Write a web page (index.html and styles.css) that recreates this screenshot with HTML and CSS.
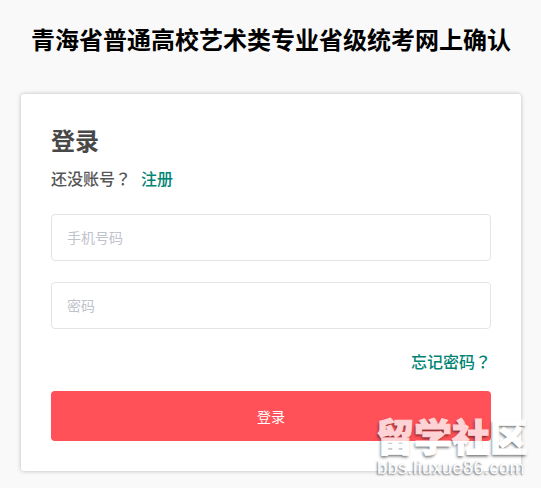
FILE: index.html
```html
<!DOCTYPE html>
<html lang="zh-CN">
<head>
    <meta charset="UTF-8">
    <meta name="viewport" content="width=device-width, initial-scale=1.0">
    <title>登录</title>
    <link rel="stylesheet" href="styles.css">
</head>
<body>
    <div class="container">
        <h1 class="page-title">青海省普通高校艺术类专业省级统考网上确认</h1>

        <form class="login-box">
            <h2 class="login-title">登录</h2>
            <p class="register">还没账号<span class="mark" lang="zh-TW">？</span><a class="link" href="#">注册</a></p>
            <input class="field" type="text" placeholder="手机号码">
            <input class="field" type="password" placeholder="密码">
            <div class="forgot"><a class="link" href="#">忘记密码<span class="mark" lang="zh-TW">？</span></a></div>
            <button class="login-button" type="button">登录</button>
        </form>
    </div>

    <div class="watermark">
        <div class="watermark-name">留学社区</div>
        <div class="watermark-url">bbs.liuxue86.com</div>
    </div>
</body>
</html>
```
FILE: styles.css
```css
* {
    box-sizing: border-box;
}
body {
    margin: 0;
    height: 488px;
    overflow: hidden;
    background-color: #f9f9f9;
    font-family: "Liberation Sans", "Noto Sans CJK SC", sans-serif;
}
.container {
    width: 500px;
    margin-left: 21px;
    padding-top: 23px;
}
.page-title {
    margin: 0 0 35px;
    font-size: 24px;
    line-height: 36px;
    text-align: center;
    white-space: nowrap;
    color: #000;
}
.login-box {
    height: 377px;
    padding: 31px 30px 30px;
    background-color: #fff;
    border-radius: 3px;
    box-shadow: 0 0 4px rgba(0, 0, 0, 0.25);
}
.login-title {
    margin: 0;
    font-size: 24px;
    line-height: 34px;
    color: #484848;
}
.register {
    margin: 9px 0 22px;
    font-size: 16px;
    font-weight: 500;
    line-height: 24px;
    color: #565656;
}
.register .link {
    margin-left: 10px;
}
/* full-width question mark centred in its cell */
.mark {
    font-family: "Noto Sans CJK TC", sans-serif;
    line-height: 1;
}
.link {
    color: #008474;
    font-weight: 500;
    text-decoration: none;
}
.field {
    display: block;
    width: 100%;
    height: 47px;
    margin-bottom: 21px;
    padding: 0 15px;
    border: 1px solid #e4e4e4;
    border-radius: 4px;
    outline: none;
    font-family: inherit;
    font-size: 14px;
}
.field::placeholder {
    color: #bfc3cc;
}
.forgot {
    padding-top: 1px;
    margin-bottom: 16px;
    font-size: 16px;
    line-height: 24px;
    text-align: right;
}
.login-button {
    display: block;
    width: 100%;
    height: 50px;
    border: none;
    border-radius: 4px;
    background-color: #ff5157;
    color: #fff;
    font-family: inherit;
    font-size: 14px;
    cursor: pointer;
}
/* site mark over the bottom right corner */
.watermark {
    position: absolute;
    left: 376px;
    top: 418px;
    white-space: nowrap;
    pointer-events: none;
    color: #fff;
    opacity: 0.75;
}
.watermark-name {
    font-size: 38px;
    font-weight: 900;
    line-height: 41px;
    -webkit-text-stroke: 1px #fff;
    text-shadow: -1px 2px 3px rgba(0, 0, 0, 0.75);
}
.watermark-url {
    padding-left: 1px;
    font-size: 18px;
    letter-spacing: 0.5px;
    line-height: 18px;
    text-shadow: -1px 1px 2px rgba(0, 0, 0, 0.7);
}
```
